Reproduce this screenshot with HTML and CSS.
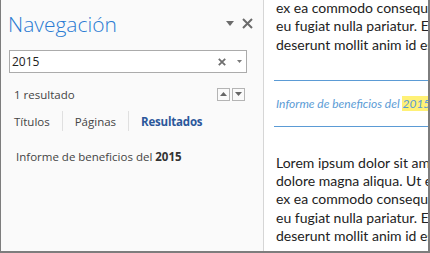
FILE: index.html
```html
<!DOCTYPE html>
<html lang="es">
<head>
<meta charset="utf-8">
<link rel="stylesheet" href="styles.css">
</head>
<body>
<div class="frame">
  <aside class="nav">
    <div class="nav-head">
      <h1 class="nav-title">Navegación</h1>
      <div class="head-icons">
        <svg class="ico-tri" width="8" height="5" viewBox="0 0 8 5"><path d="M0 0H8L4 5Z" fill="#6b6b6b"/></svg>
        <svg class="ico-x" width="11" height="11" viewBox="0 0 11 11"><path d="M1 1L10 10M10 1L1 10" stroke="#6b6b6b" stroke-width="2"/></svg>
      </div>
    </div>
    <div class="search">
      <span class="search-text">2015</span>
      <svg class="search-x" width="8" height="8" viewBox="0 0 8 8"><path d="M0.8 0.8L7.2 7.2M7.2 0.8L0.8 7.2" stroke="#6f6f6f" stroke-width="1.8"/></svg>
      <svg class="search-dd" width="5" height="3" viewBox="0 0 5 3"><path d="M0 0H5L2.5 3Z" fill="#7a7a7a"/></svg>
    </div>
    <div class="results-row">
      <span class="results-count">1 resultado</span>
      <div class="stepper">
        <span class="step"><svg width="7" height="4" viewBox="0 0 7 4"><path d="M0 4H7L3.5 0Z" fill="#666"/></svg></span>
        <span class="step"><svg width="7" height="4" viewBox="0 0 7 4"><path d="M0 0H7L3.5 4Z" fill="#666"/></svg></span>
      </div>
    </div>
    <div class="tabs">
      <span class="tab">Títulos</span>
      <span class="tab-sep"></span>
      <span class="tab">Páginas</span>
      <span class="tab-sep"></span>
      <span class="tab tab-active">Resultados</span>
    </div>
    <div class="result-item">Informe de beneficios del <b>2015</b></div>
  </aside>
  <main class="doc">
    <div class="page">
      <p class="para">ex ea commodo consequat<br>eu fugiat nulla pariatur. Ex<br>deserunt mollit anim id est</p>
      <div class="heading-block">
        <p class="heading">Informe de beneficios del <mark class="hl">2015</mark></p>
      </div>
      <p class="para para-2">Lorem ipsum dolor sit amet<br>dolore magna aliqua. Ut enim<br>ex ea commodo consequat<br>eu fugiat nulla pariatur. Ex<br>deserunt mollit anim id est</p>
    </div>
  </main>
</div>
</body>
</html>
```
FILE: styles.css
```css
html, body {
  margin: 0;
  padding: 0;
  background: #ffffff;
}
.frame {
  width: 430px;
  height: 253px;
  box-sizing: border-box;
  border-left: 1px solid #7d7d7d;
  border-right: 2px solid #7d7d7d;
  border-bottom: 2px solid #7d7d7d;
  display: flex;
  overflow: hidden;
  font-family: "Open Sans", "Noto Sans", sans-serif;
}
.nav {
  width: 262px;
  flex: 0 0 262px;
  background: #fafafa;
  border-right: 1px solid #d6d6d6;
  color: #444444;
  font-size: 11.5px;
}
.nav-head {
  display: flex;
  align-items: center;
  justify-content: space-between;
  height: 46px;
  padding: 0 10px 0 7px;
}
.nav-title {
  margin: 0;
  font-weight: 300;
  font-size: 21px;
  color: #2b7cd3;
  line-height: 1;
  padding-top: 2px;
}
.head-icons {
  display: flex;
  align-items: center;
  gap: 8px;
}
.ico-tri { margin-top: 1px; }
.search {
  margin: 4px 16px 0 8px;
  height: 23px;
  box-sizing: border-box;
  border: 1px solid #ababab;
  background: #ffffff;
  display: flex;
  align-items: center;
  padding: 0 4px 0 2px;
}
.search-text {
  flex: 1;
  color: #222222;
  font-size: 12px;
}
.search-x { margin-right: 11px; }
.results-row {
  display: flex;
  align-items: center;
  justify-content: space-between;
  margin: 14px 18px 0 13px;
  height: 14px;
}
.stepper {
  display: flex;
  gap: 2px;
}
.step {
  width: 13px;
  height: 13px;
  box-sizing: border-box;
  border: 1px solid #b4b4b4;
  display: flex;
  align-items: center;
  justify-content: center;
  background: #fafafa;
}
.tabs {
  display: flex;
  align-items: center;
  margin: 10px 0 0 13px;
  height: 20px;
}
.tab { color: #444444; }
.tab-sep {
  width: 1px;
  height: 20px;
  background: #e0e0e0;
  margin: 0 12px 0 12px;
}
.tab-active {
  color: #2b579a;
  font-weight: 700;
  letter-spacing: -0.2px;
}
.result-item {
  margin: 18px 0 0 15px;
  color: #444444;
}
.result-item b { color: #333; }
.doc {
  flex: 1;
  overflow: hidden;
  background: #ffffff;
}
.page {
  margin-top: -1px;
  padding-left: 12px;
  width: 600px;
  font-family: "Lato", "Open Sans", sans-serif;
  font-size: 14px;
  line-height: 18.3px;
  color: #222222;
}
.para {
  margin: 0;
  white-space: nowrap;
}
.heading-block {
  margin: 26px 0 0 -2px;
  border-top: 1px solid #5b9bd5;
  border-bottom: 1px solid #5b9bd5;
  padding: 13px 0 12px 2px;
}
.heading {
  margin: 0;
  font-style: italic;
  color: #5b9bd5;
  font-size: 12px;
  line-height: 20px;
  white-space: nowrap;
}
.hl {
  background: #fff176;
  color: #5b9bd5;
}
.para-2 { margin-top: 27px; }
```
